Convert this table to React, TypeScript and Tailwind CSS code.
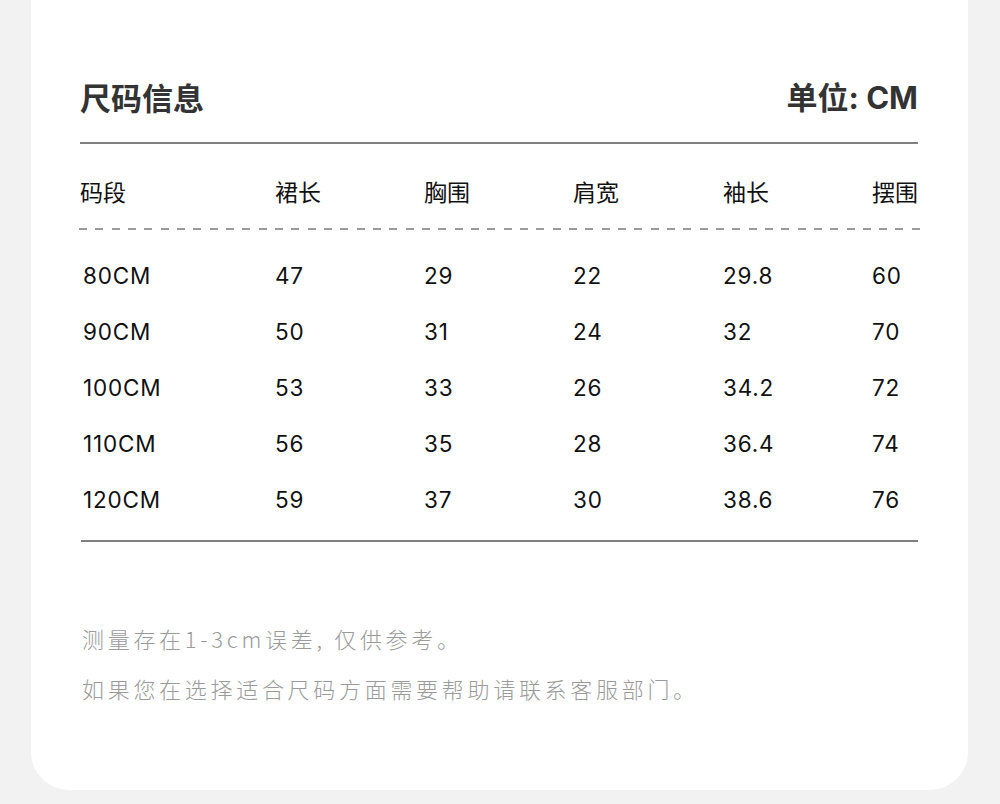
const COLS = "grid grid-cols-[195px_149px_149px_150px_149px_1fr]";

const HEADERS = ["码段", "裙长", "胸围", "肩宽", "袖长", "摆围"];

const ROWS = [
  ["80CM", "47", "29", "22", "29.8", "60"],
  ["90CM", "50", "31", "24", "32", "70"],
  ["100CM", "53", "33", "26", "34.2", "72"],
  ["110CM", "56", "35", "28", "36.4", "74"],
  ["120CM", "59", "37", "30", "38.6", "76"],
];

export default function App() {
  return (
    <div className="min-h-[804px] w-full bg-[#f2f2f2] font-['Inter','Noto_Sans_CJK_SC',sans-serif]">
      <div className="ml-[31px] w-[937px] bg-white rounded-b-[38px] pl-[49px] pr-[50px] pt-[81px] pb-[77px]">
        {/* title */}
        <div className="flex h-[31px] items-center justify-between leading-[31px] text-[31px] font-bold text-[#333]">
          <span className="font-['Noto_Sans_CJK_SC',sans-serif]">尺码信息</span>
          <span>
            <span className="font-['Noto_Sans_CJK_SC',sans-serif]">单位</span>: CM
          </span>
        </div>
        <div className="mt-[30px] h-[2px] bg-[#808080]" />

        {/* header */}
        <div className={`${COLS} mt-[27px] h-[40px] items-center text-[23px] text-[#111] font-['Noto_Sans_CJK_SC',sans-serif]`}>
          {HEADERS.map((h) => (
            <span key={h}>{h}</span>
          ))}
        </div>
        <div className="mt-[17px] h-[1.5px] w-[842px] -ml-[1px] bg-[repeating-linear-gradient(to_right,#9a9a9a_0_8px,transparent_8px_16.33px)]" />

        {/* data rows */}
        <div className="mt-[18px]">
          {ROWS.map((r) => (
            <div key={r[0]} className={`${COLS} h-[56px] items-center text-[22.5px] tracking-[0.8px] text-[#111]`}>
              {r.map((c, i) => (
                <span key={i} className={i === 0 ? "pl-[3px]" : ""}>
                  {c}
                </span>
              ))}
            </div>
          ))}
        </div>
        <div className="mt-[12px] ml-[1px] h-[2px] bg-[#808080]" />

        {/* notes */}
        <div className="mt-[71px] pl-[2px] text-[22px] leading-[50px] tracking-[3.7px] font-light text-[#9a9a9a] font-['Noto_Sans_CJK_SC',sans-serif]">
          <p>测量存在1-3cm误差, 仅供参考。</p>
          <p>如果您在选择适合尺码方面需要帮助请联系客服部门。</p>
        </div>
      </div>
    </div>
  );
}
